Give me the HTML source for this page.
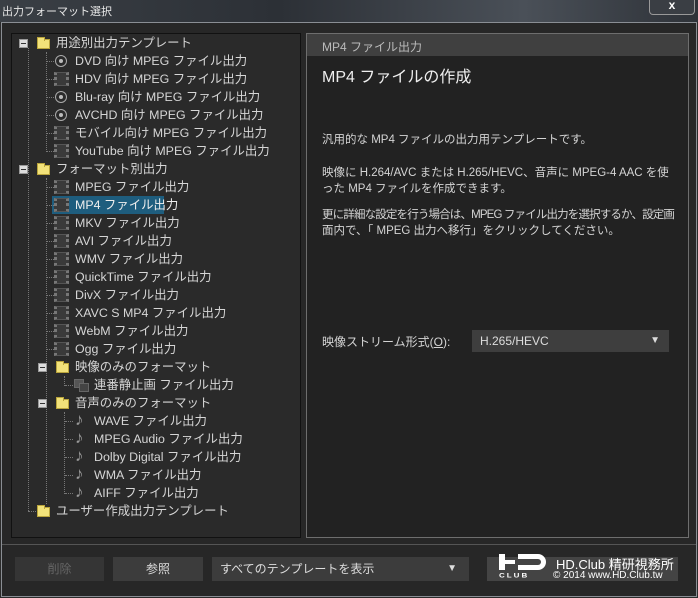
<!DOCTYPE html><html><head><meta charset="utf-8"><style>
*{margin:0;padding:0;box-sizing:border-box}
body{width:698px;height:598px;overflow:hidden;background:#2b2b2b;font-family:"Liberation Sans","Noto Sans CJK JP",sans-serif;color:#d8d8d8;position:relative}
.a{position:absolute;white-space:nowrap}
#title{left:0;top:0;width:698px;height:22px;background:linear-gradient(90deg,#3a3f45 0,#2c3036 40%,#4a5058 75%,#2e3238 100%)}
#win{left:1px;top:22px;width:696px;height:575px;border:1px solid #8a8e94;background:#272727}
#lp{left:11px;top:33px;width:290px;height:505px;background:#2a2a2a;border:1px solid #111}
#rp{left:306px;top:33px;width:383px;height:505px;background:#222;border:1px solid #6e6e6e}
.t{font-size:12.4px;line-height:18px;color:#d6d6d6}
.ex{width:9px;height:9px;border:1px solid #999;background:#ddd}
.ex:after{content:"";position:absolute;left:1px;top:3px;width:5px;height:1px;background:#333}
.fd{width:13px;height:10px;background:#f2e27a;border:1px solid #b9a43c}
.fd:before{content:"";position:absolute;left:-1px;top:-3px;width:6px;height:3px;background:#f2e27a;border:1px solid #b9a43c;border-bottom:0}
.fm{width:15px;height:14px;border:1px solid #555;border-left:3px dotted #777;border-right:3px dotted #777;background:#3a3a3a}
.cd{width:12px;height:12px;border:1px solid #aaa;border-radius:50%}
.cd:after{content:"";position:absolute;left:3px;top:3px;width:4px;height:4px;background:#bbb;border-radius:50%}
.vl{border-left:1px dotted #777}
.hl{border-top:1px dotted #777;height:1px}
.btn{height:24px;background:#3c3c3c;font-size:12px;line-height:24px;text-align:center}
.bd{font-size:11.5px;line-height:16px;color:#d4d4d4}
</style></head><body>
<div class="a" id="title"></div>
<div class="a" style="left:2px;top:3px;font-size:11px;color:#e8e8e8">出力フォーマット選択</div>
<div class="a" style="left:649px;top:-2px;width:46px;height:17px;border:1px solid #999;border-top:0;border-radius:0 0 4px 4px;background:#3a3e44;color:#fff;font-size:12px;text-align:center;line-height:15px;font-weight:bold">x</div>
<div class="a" id="win"></div>
<div class="a" id="lp"></div>
<div class="a" id="rp"></div>
<div class="a" style="left:307px;top:34px;width:381px;height:22px;background:#404040"></div>
<div class="a" style="left:322px;top:38px;font-size:12px;color:#bbb">MP4 ファイル出力</div>
<div class="a" style="left:322px;top:63px;font-size:16px;color:#eee">MP4 ファイルの作成</div>
<div class="a bd" style="left:322px;top:132px">汎用的な MP4 ファイルの出力用テンプレートです。</div>
<div class="a bd" style="left:322px;top:165px">映像に H.264/AVC または H.265/HEVC、音声に MPEG-4 AAC を使<br>った MP4 ファイルを作成できます。</div>
<div class="a bd" style="left:322px;top:207px;letter-spacing:-0.85px">更に詳細な設定を行う場合は、MPEG ファイル出力を選択するか、設定画</div>
<div class="a bd" style="left:322px;top:223px">面内で、「 MPEG 出力へ移行」をクリックしてください。</div>
<div class="a" style="left:322px;top:333px;font-size:12px;color:#d4d4d4">映像ストリーム形式(<u>O</u>):</div>
<div class="a" style="left:472px;top:330px;width:197px;height:22px;background:#3e3e3e;font-size:12px;line-height:22px;padding-left:8px;color:#ddd">H.265/HEVC<span style="position:absolute;right:9px;font-size:10px">▼</span></div>

<div class="a vl" style="left:28px;top:48px;height:463px"></div>
<div class="a vl" style="left:46px;top:52px;height:100px"></div>
<div class="a vl" style="left:46px;top:178px;height:326px"></div>
<div class="a vl" style="left:64px;top:376px;height:10px"></div>
<div class="a vl" style="left:64px;top:412px;height:82px"></div>
<div class="a hl" style="left:28px;top:511px;width:10px"></div>

<div class="a ex" style="left:19px;top:39px"></div><div class="a fd" style="left:37px;top:39px"></div><div class="a t" style="left:56px;top:34px">用途別出力テンプレート</div>
<div class="a hl" style="left:47px;top:61px;width:7px"></div><div class="a cd" style="left:55px;top:55px"></div><div class="a t" style="left:75px;top:52px">DVD 向け MPEG ファイル出力</div>
<div class="a hl" style="left:47px;top:79px;width:7px"></div><div class="a fm" style="left:54px;top:72px"></div><div class="a t" style="left:75px;top:70px">HDV 向け MPEG ファイル出力</div>
<div class="a hl" style="left:47px;top:97px;width:7px"></div><div class="a cd" style="left:55px;top:91px"></div><div class="a t" style="left:75px;top:88px">Blu-ray 向け MPEG ファイル出力</div>
<div class="a hl" style="left:47px;top:115px;width:7px"></div><div class="a cd" style="left:55px;top:109px"></div><div class="a t" style="left:75px;top:106px">AVCHD 向け MPEG ファイル出力</div>
<div class="a hl" style="left:47px;top:133px;width:7px"></div><div class="a fm" style="left:54px;top:126px"></div><div class="a t" style="left:75px;top:124px">モバイル向け MPEG ファイル出力</div>
<div class="a hl" style="left:47px;top:151px;width:7px"></div><div class="a fm" style="left:54px;top:144px"></div><div class="a t" style="left:75px;top:142px">YouTube 向け MPEG ファイル出力</div>
<div class="a ex" style="left:19px;top:165px"></div><div class="a fd" style="left:37px;top:165px"></div><div class="a t" style="left:56px;top:160px">フォーマット別出力</div>
<div class="a" style="left:52px;top:196px;width:112px;height:18px;background:#1e5d7e"></div>
<div class="a hl" style="left:47px;top:187px;width:7px"></div><div class="a fm" style="left:54px;top:180px"></div><div class="a t" style="left:75px;top:178px">MPEG ファイル出力</div>
<div class="a hl" style="left:47px;top:205px;width:7px"></div><div class="a fm" style="left:54px;top:198px"></div><div class="a t" style="left:75px;top:196px;color:#eee">MP4 ファイル出力</div>
<div class="a hl" style="left:47px;top:223px;width:7px"></div><div class="a fm" style="left:54px;top:216px"></div><div class="a t" style="left:75px;top:214px">MKV ファイル出力</div>
<div class="a hl" style="left:47px;top:241px;width:7px"></div><div class="a fm" style="left:54px;top:234px"></div><div class="a t" style="left:75px;top:232px">AVI ファイル出力</div>
<div class="a hl" style="left:47px;top:259px;width:7px"></div><div class="a fm" style="left:54px;top:252px"></div><div class="a t" style="left:75px;top:250px">WMV ファイル出力</div>
<div class="a hl" style="left:47px;top:277px;width:7px"></div><div class="a fm" style="left:54px;top:270px"></div><div class="a t" style="left:75px;top:268px">QuickTime ファイル出力</div>
<div class="a hl" style="left:47px;top:295px;width:7px"></div><div class="a fm" style="left:54px;top:288px"></div><div class="a t" style="left:75px;top:286px">DivX ファイル出力</div>
<div class="a hl" style="left:47px;top:313px;width:7px"></div><div class="a fm" style="left:54px;top:306px"></div><div class="a t" style="left:75px;top:304px">XAVC S MP4 ファイル出力</div>
<div class="a hl" style="left:47px;top:331px;width:7px"></div><div class="a fm" style="left:54px;top:324px"></div><div class="a t" style="left:75px;top:322px">WebM ファイル出力</div>
<div class="a hl" style="left:47px;top:349px;width:7px"></div><div class="a fm" style="left:54px;top:342px"></div><div class="a t" style="left:75px;top:340px">Ogg ファイル出力</div>
<div class="a ex" style="left:38px;top:363px"></div><div class="a fd" style="left:56px;top:363px"></div><div class="a t" style="left:75px;top:358px">映像のみのフォーマット</div>
<div class="a hl" style="left:65px;top:385px;width:8px"></div><div class="a" style="left:74px;top:379px;width:10px;height:9px;background:#555;border:1px solid #666"></div><div class="a" style="left:79px;top:383px;width:10px;height:9px;background:#444;border:1px solid #666"></div><div class="a t" style="left:94px;top:376px">連番静止画 ファイル出力</div>
<div class="a ex" style="left:38px;top:399px"></div><div class="a fd" style="left:56px;top:399px"></div><div class="a t" style="left:75px;top:394px">音声のみのフォーマット</div>
<div class="a hl" style="left:65px;top:421px;width:8px"></div><div class="a t" style="left:75px;top:411px;font-size:17px;color:#999">♪</div><div class="a t" style="left:94px;top:412px">WAVE ファイル出力</div>
<div class="a hl" style="left:65px;top:439px;width:8px"></div><div class="a t" style="left:75px;top:429px;font-size:17px;color:#999">♪</div><div class="a t" style="left:94px;top:430px">MPEG Audio ファイル出力</div>
<div class="a hl" style="left:65px;top:457px;width:8px"></div><div class="a t" style="left:75px;top:447px;font-size:17px;color:#999">♪</div><div class="a t" style="left:94px;top:448px">Dolby Digital ファイル出力</div>
<div class="a hl" style="left:65px;top:475px;width:8px"></div><div class="a t" style="left:75px;top:465px;font-size:17px;color:#999">♪</div><div class="a t" style="left:94px;top:466px">WMA ファイル出力</div>
<div class="a hl" style="left:65px;top:493px;width:8px"></div><div class="a t" style="left:75px;top:483px;font-size:17px;color:#999">♪</div><div class="a t" style="left:94px;top:484px">AIFF ファイル出力</div>
<div class="a fd" style="left:37px;top:507px"></div><div class="a t" style="left:56px;top:502px">ユーザー作成出力テンプレート</div>

<div class="a" style="left:2px;top:544px;width:694px;height:1px;background:#555"></div>
<div class="a btn" style="left:15px;top:557px;width:89px;color:#666;background:#353535">削除</div>
<div class="a btn" style="left:113px;top:557px;width:90px;color:#ddd">参照</div>
<div class="a btn" style="left:212px;top:557px;width:257px;text-align:left;padding-left:8px;color:#ddd">すべてのテンプレートを表示<span style="position:absolute;right:12px;font-size:10px">▼</span></div>
<div class="a btn" style="left:487px;top:557px;width:191px;background:#444"></div>
<div class="a" style="left:499px;top:554px;width:6px;height:16px;background:#fff"></div>
<div class="a" style="left:505px;top:560px;width:10px;height:4px;background:#fff"></div>
<div class="a" style="left:518px;top:554px;width:28px;height:16px;border:5px solid #fff;border-left:none;border-radius:0 8px 8px 0"></div>
<div class="a" style="left:499px;top:571px;font-size:8px;font-weight:bold;color:#fff;letter-spacing:2px;transform:scaleY(0.8)">CLUB</div>
<div class="a" style="left:556px;top:554px;font-size:13px;color:#fff">HD.Club 精研視務所</div>
<div class="a" style="left:553px;top:570px;font-size:10px;color:#fff">© 2014  www.HD.Club.tw</div>
</body></html>
